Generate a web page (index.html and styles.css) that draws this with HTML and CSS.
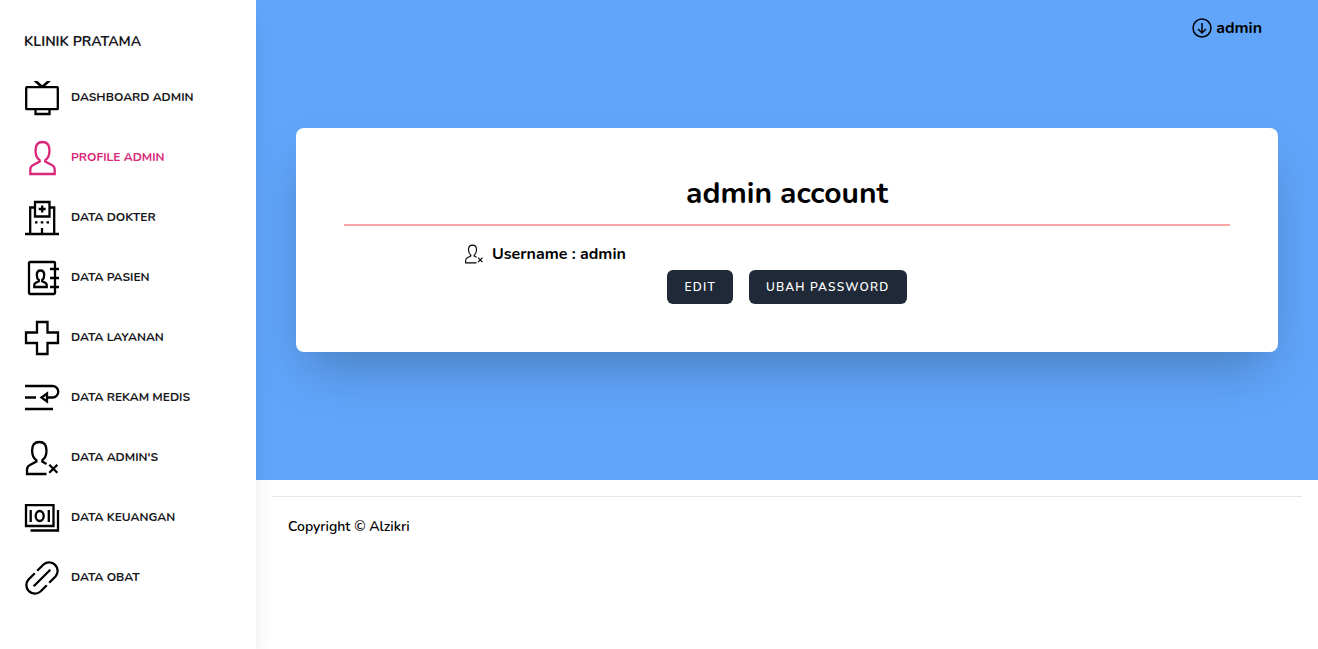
FILE: index.html
```html
<!DOCTYPE html>
<html lang="id">
<head>
<meta charset="utf-8">
<title>Klinik Pratama</title>
<link rel="stylesheet" href="styles.css">
</head>
<body>
<div class="layout">
  <nav class="sidebar">
    <a class="brand" href="#">Klinik Pratama</a>
    <ul class="menu">
      <li><a class="menu-link" href="#">
        <svg class="icon" viewBox="0 0 36 36"><rect x="2.200" y="7.200" width="31.600" height="22" rx="0.500"/><path d="M11.500 29v5h14v-5"/><path class="solid" d="M9.500 1h4l4.700 4.200L22.900 1h4l-6.900 6.200h-3.600z"/></svg>
        Dashboard Admin</a></li>
      <li><a class="menu-link active" href="#">
        <svg class="icon" viewBox="0 0 36 36"><path d="M18.500 2c-5 0-7 3.500-7 8.500 0 4 1 7.500 4.200 9.800v1.200l-6.900 3.700c-2 1-2.500 2.500-2.500 4.500V34h24.400v-4.300c0-2-.5-3.500-2.500-4.500L21.300 21.500v-1.200c3.200-2.300 4.200-5.800 4.200-9.800 0-5-2-8.500-7-8.500z"/></svg>
        Profile Admin</a></li>
      <li><a class="menu-link" href="#">
        <svg class="icon" viewBox="0 0 36 36"><path d="M1 34h34M6.200 34V7.500H11M25 7.500h5.200V34M11 2h14.500v14.500H11zM18.200 5.500v7M14.700 9h7M18 28v6M11 22.300h2.500M16.800 22.300h2.500M22.500 22.300H25"/></svg>
        Data Dokter</a></li>
      <li><a class="menu-link" href="#">
        <svg class="icon" viewBox="0 0 36 36"><rect x="5" y="2" width="26" height="32" rx="1"/><path d="M26 9h9M26 18h9M26 27h9M16.500 10.500c-2.700 0-3.700 1.800-3.700 4.500 0 2.200.6 4 2 5v1.300l-3 1.400c-1.200.6-1.500 1.300-1.500 2.300v2h12.400v-2c0-1-.3-1.700-1.500-2.300l-3-1.400V20c1.400-1 2-2.800 2-5 0-2.700-1-4.500-3.700-4.500z"/></svg>
        Data Pasien</a></li>
      <li><a class="menu-link" href="#">
        <svg class="icon" viewBox="0 0 36 36"><path d="M13 2h10.500v10.500H34v10.500H23.500V34H13V23H2V12.500h11z"/></svg>
        Data Layanan</a></li>
      <li><a class="menu-link" href="#">
        <svg class="icon" viewBox="0 0 36 36"><path d="M1 6h27.500a5.600 5.600 0 0 1 0 11.500H23M1 17.500h11M1 29h28M23 13.500v8l-5.500-4z"/></svg>
        Data Rekam Medis</a></li>
      <li><a class="menu-link" href="#">
        <svg class="icon" viewBox="0 0 36 36"><path d="M22.500 34H3v-4.300c0-2 .5-3.500 2.500-4.500L12.400 21.500v-1.200c-3.200-2.300-4.300-5.800-4.300-9.800 0-5 2.200-8.500 7.200-8.500s7.200 3.500 7.200 8.500c0 4-1 7.500-4.200 9.800v1.200l4.200 2.500M25.300 24.700l8 8M33.300 24.700l-8 8"/></svg>
        Data Admin's</a></li>
      <li><a class="menu-link" href="#">
        <svg class="icon" viewBox="0 0 36 36"><path d="M2 5.200h27.500V26H2zM34 10v20.500H6.500M6.700 10v12M24.800 10v12"/><ellipse cx="15.700" cy="16" rx="4" ry="5"/></svg>
        Data Keuangan</a></li>
      <li><a class="menu-link" href="#">
        <svg class="icon" viewBox="0 0 36 36"><path d="M10.800 13.200L4.500 19.500a8.500 8.500 0 0 0 12 12l6.300-6.300M13.200 10.800l6.300-6.300a8.500 8.500 0 0 1 12 12l-6.300 6.300M9.700 26.300L26.300 9.700"/></svg>
        Data Obat</a></li>
    </ul>
  </nav>
  <div class="page">
    <div class="hero">
      <header class="topbar">
        <button class="user" type="button">
          <svg class="icon-small" viewBox="0 0 20 20"><circle cx="10" cy="10" r="9"/><path d="M10 5v10M6 11l4 4 4-4"/></svg>
          admin
        </button>
      </header>
      <main class="card">
        <h1 class="card-title">admin account</h1>
        <div class="detail">
          <svg class="icon-small" viewBox="0 0 36 36"><path d="M22.500 34H3v-4.300c0-2 .5-3.500 2.500-4.500L12.400 21.500v-1.200c-3.200-2.300-4.300-5.800-4.300-9.800 0-5 2.200-8.500 7.200-8.500s7.200 3.500 7.200 8.500c0 4-1 7.500-4.200 9.800v1.200l4.200 2.500M25.300 24.700l8 8M33.300 24.700l-8 8"/></svg>
          Username : admin
        </div>
        <div class="actions">
          <button class="button" type="button">Edit</button>
          <button class="button" type="button">Ubah Password</button>
        </div>
      </main>
    </div>
    <footer class="footer">Copyright © Alzikri</footer>
  </div>
</div>
</body>
</html>
```
FILE: styles.css
```css
* { box-sizing: border-box; }
body {
  margin: 0;
  background: #fff;
  color: #000;
  font-family: Nunito, Lato, sans-serif;
  font-size: 16px;
  line-height: 24px;
}
.layout { display: flex; min-height: 100vh; }
.sidebar {
  position: relative;
  z-index: 1;
  flex: 0 0 256px;
  padding: 32px 24px;
  background: #fff;
  box-shadow: 0 20px 25px -5px rgba(0, 0, 0, .1), 0 8px 10px -6px rgba(0, 0, 0, .1);
}
.brand {
  display: block;
  color: #18181b;
  font-size: 14px;
  font-weight: 700;
  line-height: 20px;
  text-decoration: none;
  text-transform: uppercase;
}
.menu {
  display: grid;
  gap: 24px;
  margin: 28px 0 0;
  padding: 0;
  list-style: none;
}
.menu-link {
  display: flex;
  align-items: flex-start;
  gap: 11px;
  color: #18181b;
  font-size: 12px;
  font-weight: 700;
  line-height: 34px;
  text-decoration: none;
  text-transform: uppercase;
}
.icon, .icon-small {
  flex: none;
  fill: none;
  stroke: #000;
  stroke-width: 2;
}
.icon { width: 36px; height: 36px; stroke-width: 2.3; }
.icon .solid { fill: #000; stroke: none; }
.icon-small { width: 20px; height: 20px; }
.user .icon-small { stroke-width: 1.5; }
.menu-link.active { color: #db2777; }
.menu-link.active .icon { stroke: #db2777; }
.page { flex: 1; min-width: 0; }
.hero {
  padding: 16px 40px 128px;
  background: #60a5fa;
}
.topbar {
  display: flex;
  justify-content: flex-end;
  margin-bottom: 88px;
  padding-right: 16px;
}
.user {
  display: flex;
  align-items: center;
  gap: 4px;
  padding: 0;
  border: 0;
  background: none;
  color: #000;
  font: inherit;
  font-weight: 700;
}
.card {
  padding: 48px;
  border-radius: 8px;
  background: #fff;
  box-shadow: 0 25px 50px -12px rgba(0, 0, 0, .25);
}
.card-title {
  margin: 0 0 16px;
  padding-bottom: 12px;
  border-bottom: 2px solid #fca5a5;
  font-size: 30px;
  font-weight: 700;
  line-height: 36px;
  text-align: center;
}
.detail {
  display: flex;
  align-items: center;
  gap: 8px;
  margin: 0 120px 4px;
  font-weight: 700;
}
.actions { display: flex; justify-content: center; gap: 16px; }
.button {
  padding: 8px 16px;
  border: 1px solid transparent;
  border-radius: 6px;
  background: #1f2937;
  color: #fff;
  font: inherit;
  font-size: 12px;
  font-weight: 600;
  line-height: 16px;
  letter-spacing: .1em;
  text-transform: uppercase;
}
.footer {
  margin: 16px;
  padding: 20px 16px;
  border-top: 1px solid #e5e7eb;
  font-size: 14px;
  font-weight: 600;
  line-height: 20px;
}
```
